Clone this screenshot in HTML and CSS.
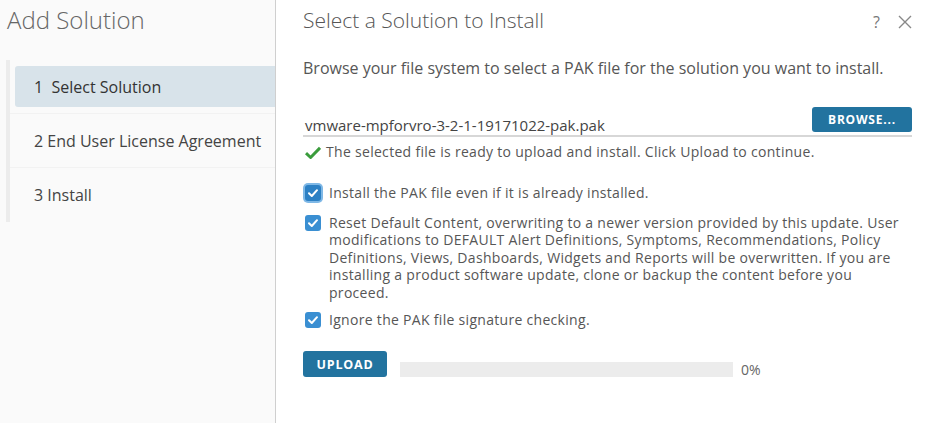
FILE: index.html
```html
<!DOCTYPE html>
<html>
<head>
<meta charset="utf-8">
<link rel="stylesheet" href="styles.css">
</head>
<body>
<div class="wizard">
  <aside class="side">
    <h1 class="side-title">Add Solution</h1>
    <ul class="steps">
      <li class="step active"><span>1&nbsp; Select Solution</span></li>
      <li class="step"><span>2 End User License Agreement</span></li>
      <li class="step"><span>3 Install</span></li>
    </ul>
  </aside>
  <main class="content">
    <header class="head">
      <h2 class="title">Select a Solution to Install</h2>
      <div class="head-actions">
        <span class="help">?</span>
        <svg class="close" width="14" height="14" viewBox="0 0 14 14"><path d="M1 1L13 13M13 1L1 13" stroke="#888" stroke-width="1.4" fill="none"/></svg>
      </div>
    </header>
    <p class="desc">Browse your file system to select a PAK file for the solution you want to install.</p>
    <div class="file-row">
      <span class="file-name">vmware-mpforvro-3-2-1-19171022-pak.pak</span>
      <button class="btn browse">BROWSE...</button>
    </div>
    <div class="status">
      <svg class="ok" width="16" height="13" viewBox="0 0 16 13"><path d="M1 7.2L5.6 11.5L15 1.8" stroke="#3a9c3c" stroke-width="3" fill="none" stroke-linejoin="round"/></svg>
      <span>The selected file is ready to upload and install. Click Upload to continue.</span>
    </div>
    <label class="check focus c1">
      <span class="box"><svg width="12" height="10" viewBox="0 0 12 10"><path d="M2 5.2L4.8 8L10 2.2" stroke="#fff" stroke-width="2" fill="none" stroke-linecap="round" stroke-linejoin="round"/></svg></span>
      <span class="check-text">Install the PAK file even if it is already installed.</span>
    </label>
    <label class="check c2">
      <span class="box"><svg width="12" height="10" viewBox="0 0 12 10"><path d="M2 5.2L4.8 8L10 2.2" stroke="#fff" stroke-width="2" fill="none" stroke-linecap="round" stroke-linejoin="round"/></svg></span>
      <span class="check-text">Reset Default Content, overwriting to a newer version provided by this update. User modifications to DEFAULT Alert Definitions, Symptoms, Recommendations, Policy Definitions, Views, Dashboards, Widgets and Reports will be overwritten. If you are installing a product software update, clone or backup the content before you proceed.</span>
    </label>
    <label class="check c3">
      <span class="box"><svg width="12" height="10" viewBox="0 0 12 10"><path d="M2 5.2L4.8 8L10 2.2" stroke="#fff" stroke-width="2" fill="none" stroke-linecap="round" stroke-linejoin="round"/></svg></span>
      <span class="check-text">Ignore the PAK file signature checking.</span>
    </label>
    <div class="upload-row">
      <button class="btn upload">UPLOAD</button>
      <div class="progress"><div class="bar" style="width:0%"></div></div>
      <span class="pct">0%</span>
    </div>
  </main>
</div>
</body>
</html>
```

FILE: styles.css
```css
* { box-sizing: border-box; }
html, body { margin: 0; padding: 0; background: #fff; }
body {
  font-family: "Open Sans", "Liberation Sans", sans-serif;
  color: #565656;
  width: 933px;
  height: 423px;
  overflow: hidden;
}
.wizard { display: flex; height: 423px; }
.side {
  width: 276px;
  flex: none;
  background: #fafafa;
  border-right: 1px solid #cfcfcf;
}
.side-title {
  margin: 0;
  padding: 4px 0 0 7px;
  font-size: 24px;
  font-weight: 300;
  color: #666;
  line-height: 32px;
  height: 60px;
}
.steps {
  list-style: none;
  margin: 0 0 0 6px;
  padding: 0;
  border-left: 4px solid #ececec;
}
.step {
  height: 54px;
  padding: 6px 0 6px 5px;
  border-bottom: 1px solid #f2f2f2;
}
.step:last-child { border-bottom: none; }
.step span {
  display: flex;
  align-items: center;
  height: 41px;
  padding-left: 19px;
  font-size: 16px;
  color: #444;
  border-radius: 3px 0 0 3px;
}
.step.active span { background: #d8e3ea; color: #333; }
.content {
  flex: 1;
  padding: 0 21px 0 27px;
}
.head { display: flex; justify-content: space-between; align-items: center; height: 40px; }
.title {
  margin: 0;
  font-size: 21px;
  font-weight: 300;
  color: #565656;
  line-height: 38px;
}
.head-actions { display: flex; align-items: center; gap: 18px; padding-top: 3px; }
.help { font-size: 16px; color: #777; }
.desc { margin: 18px 0 0; font-size: 16px; line-height: 20px; }
.file-row {
  display: flex;
  justify-content: space-between;
  align-items: flex-end;
  margin-top: 29px;
  border-bottom: 2px solid #d7d7d7;
  padding-bottom: 3px;
}
.file-name { font-size: 15px; color: #444; padding-left: 2px; line-height: 18px; margin-bottom: -2px; }
.btn {
  border: none;
  background: #22739f;
  color: #fff;
  font-family: "Open Sans", sans-serif;
  font-weight: 700;
  font-size: 12px;
  letter-spacing: 0.8px;
  border-radius: 3px;
  cursor: pointer;
}
.browse { width: 100px; height: 25px; }
.status { display: flex; align-items: center; gap: 5px; margin-top: 5px; font-size: 14px; line-height: 20px; letter-spacing: 0.3px; padding-left: 2px; }
.check { display: flex; align-items: flex-start; gap: 8px; font-size: 14px; line-height: 17.6px; letter-spacing: 0.3px; padding-left: 2px; }
.c1 { margin-top: 22px; }
.c2 { margin-top: 12px; }
.c3 { margin-top: 9px; }
.box {
  flex: none;
  width: 16px;
  height: 16px;
  margin-top: 1px;
  background: #3a8fd2;
  border-radius: 3px;
  display: flex;
  align-items: center;
  justify-content: center;
}
.focus .box { background: #2c80c4; box-shadow: 0 0 0 2px #7fb8e6; }
.upload-row { display: flex; align-items: flex-end; margin-top: 23px; }
.upload { width: 84px; height: 26px; font-size: 12.5px; }
.progress { width: 333px; height: 15px; background: #ececec; margin-left: 13px; }
.bar { height: 100%; background: #22739f; }
.pct { font-size: 14px; line-height: 16px; margin: 0 0 -1px 8px; color: #666; }
```
